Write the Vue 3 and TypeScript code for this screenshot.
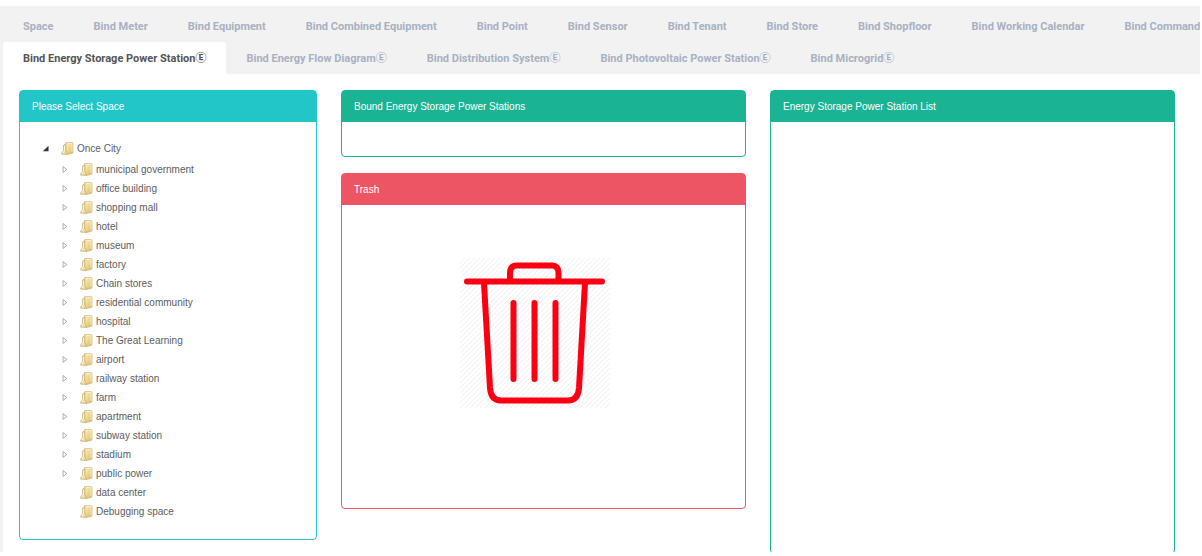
<script setup lang="ts">
import { ref } from 'vue'

interface Tab {
  label: string
  enterprise?: boolean
}

interface SpaceNode {
  name: string
  leaf?: boolean
}

const tabRows: Tab[][] = [
  [
    { label: 'Space' },
    { label: 'Bind Meter' },
    { label: 'Bind Equipment' },
    { label: 'Bind Combined Equipment' },
    { label: 'Bind Point' },
    { label: 'Bind Sensor' },
    { label: 'Bind Tenant' },
    { label: 'Bind Store' },
    { label: 'Bind Shopfloor' },
    { label: 'Bind Working Calendar' },
    { label: 'Bind Command' },
  ],
  [
    { label: 'Bind Energy Storage Power Station', enterprise: true },
    { label: 'Bind Energy Flow Diagram', enterprise: true },
    { label: 'Bind Distribution System', enterprise: true },
    { label: 'Bind Photovoltaic Power Station', enterprise: true },
    { label: 'Bind Microgrid', enterprise: true },
  ],
]

const activeTab = ref('Bind Energy Storage Power Station')

const spaces: SpaceNode[] = [
  { name: 'municipal government' },
  { name: 'office building' },
  { name: 'shopping mall' },
  { name: 'hotel' },
  { name: 'museum' },
  { name: 'factory' },
  { name: 'Chain stores' },
  { name: 'residential community' },
  { name: 'hospital' },
  { name: 'The Great Learning' },
  { name: 'airport' },
  { name: 'railway station' },
  { name: 'farm' },
  { name: 'apartment' },
  { name: 'subway station' },
  { name: 'stadium' },
  { name: 'public power' },
  { name: 'data center', leaf: true },
  { name: 'Debugging space', leaf: true },
]
</script>

<template>
  <div class="page">
    <svg class="defs" aria-hidden="true">
      <defs>
        <linearGradient id="folder-front" x1="0" y1="0" x2="1" y2="1">
          <stop offset="0" stop-color="#fdf3c4" />
          <stop offset="1" stop-color="#dcb95c" />
        </linearGradient>
        <symbol id="folder" viewBox="0 0 13 13">
          <path d="M4.600 .6h6.200q1.200 0 1.200 1v8.400q0 1.200-.8 1.400l-4 .9H4.600z" fill="url(#folder-front)" stroke="#cdb173" stroke-width=".7" />
          <path d="M6.800 1.400h4.200v8.600" fill="none" stroke="#fff8dc" stroke-width=".8" />
          <path d="M2.500 3.200l2.300-1.400v6.800l2 3.600H1q-.7 0-.5-.8l2-3z" fill="#f0dda0" stroke="#c3a870" stroke-width=".7" />
          <path d="M3.400 4v4.400l-1.300 2.600" fill="none" stroke="#fffbe8" stroke-width=".9" />
        </symbol>
      </defs>
    </svg>

    <nav class="tabs" role="tablist">
      <div v-for="(row, i) in tabRows" :key="i" class="tab-row">
        <button
          v-for="tab in row"
          :key="tab.label"
          type="button"
          role="tab"
          class="tab"
          :class="{ active: tab.label === activeTab }"
          :aria-selected="tab.label === activeTab"
          @click="activeTab = tab.label"
        >{{ tab.label }}<span v-if="tab.enterprise" class="mark">Ⓔ</span></button>
      </div>
    </nav>

    <main class="content">
      <section class="panel space">
        <h2>Please Select Space</h2>
        <ul class="tree" role="tree">
          <li role="treeitem" aria-expanded="true">
            <div class="node">
              <svg class="arrow" viewBox="0 0 7 7"><path d="M6.500 .8v5.400H.8z" fill="#333" /></svg>
              <svg class="folder"><use href="#folder" /></svg>
              <span>Once City</span>
            </div>
            <ul class="children" role="group">
              <li v-for="space in spaces" :key="space.name" class="node" role="treeitem">
                <svg class="arrow" viewBox="0 0 7 7">
                  <path v-if="!space.leaf" d="M2 .6v5.800L5.800 3.500z" fill="#fff" stroke="#999" stroke-width=".8" />
                </svg>
                <svg class="folder"><use href="#folder" /></svg>
                <span>{{ space.name }}</span>
              </li>
            </ul>
          </li>
        </ul>
      </section>

      <div class="column">
        <section class="panel bound">
          <h2>Bound Energy Storage Power Stations</h2>
          <div class="dropzone"></div>
        </section>
        <section class="panel trash">
          <h2>Trash</h2>
          <div class="bin-area">
            <svg class="bin" viewBox="0 0 150 150" role="img" aria-label="Trash">
              <defs>
                <pattern id="hatch" width="5" height="5" patternUnits="userSpaceOnUse">
                  <path d="M-1 1l2-2M0 5l5-5M4 6l2-2" stroke="#efefef" stroke-width="1" />
                </pattern>
              </defs>
              <rect width="150" height="150" fill="url(#hatch)" />
              <g fill="none" stroke="#fb0012" stroke-width="6" stroke-linecap="round">
                <path d="M24 25L30 130Q31 142.500 41 142.500H108Q118 142.500 119 130L125 25" />
                <path d="M50 23V15Q50 7.500 57 7.500H92Q98.500 7.500 98.500 15V23" />
                <path d="M7 23.500H142M53.500 45V121M74.500 45V121M95.500 45V121" />
              </g>
            </svg>
          </div>
        </section>
      </div>

      <section class="panel stations">
        <h2>Energy Storage Power Station List</h2>
      </section>
    </main>
  </div>
</template>

<style>
body {
  margin: 0;
  background: #fff;
}
</style>

<style scoped>
.page {
  box-sizing: border-box;
  height: calc(100vh - 4px);
  min-width: 900px;
  margin-right: 2px;
  padding-top: 6px;
  overflow: hidden;
  display: flex;
  flex-direction: column;
  font-family: "Liberation Sans", Arial, sans-serif;
  font-size: 10px;
  color: #5c5c5c;
}

.defs {
  position: absolute;
  width: 0;
  height: 0;
}

.tabs {
  padding: 4px 0 0 3px;
  background: #f2f2f2;
  overflow: hidden;
}

.tab-row {
  display: flex;
}

.tab {
  flex: none;
  height: 32px;
  padding: 0 20px;
  border: 0;
  border-radius: 3px 3px 0 0;
  background: none;
  color: #a7b1c2;
  font-family: Roboto, "Liberation Sans", Arial, sans-serif;
  font-size: 11px;
  font-weight: 700;
  white-space: nowrap;
  cursor: pointer;
}

.tab.active {
  background: #fff;
  color: #555;
}

.mark {
  font-family: "Noto Sans CJK SC", sans-serif;
  line-height: 1;
}

.content {
  flex: 1;
  display: grid;
  grid-template-columns: 298fr 405fr 405fr;
  gap: 24px;
  align-items: start;
  padding: 16px 25px 0 16px;
  border-left: 3px solid #f2f2f2;
}

.column {
  display: flex;
  flex-direction: column;
  gap: 16px;
}

.panel {
  --tone: #1ab394;
  min-width: 0;
  border: 1px solid var(--tone);
  border-radius: 4px;
}

.panel h2 {
  margin: 0;
  padding: 0 12px;
  background: var(--tone);
  color: #fff;
  font-size: 10px;
  font-weight: 400;
  line-height: 31px;
}

.panel.space {
  --tone: #23c6c8;
}

.panel.trash {
  --tone: #ed5565;
}

.stations {
  height: 100%;
}

.dropzone {
  height: 34px;
}

.bin-area {
  box-sizing: border-box;
  height: 303px;
  padding: 53px 0 0 118px;
}

.bin {
  display: block;
  width: 150px;
  height: 150px;
}

ul {
  margin: 0;
  padding: 0;
  list-style: none;
}

.tree {
  padding: 17px 20px 18px;
}

.children {
  padding: 2px 0 0 19px;
}

.node {
  display: flex;
  align-items: center;
  height: 19px;
  white-space: nowrap;
}

.arrow {
  width: 7px;
  height: 7px;
  margin: 0 12px 0 2px;
}

.folder {
  width: 13px;
  height: 13px;
  margin-right: 3px;
}
</style>
